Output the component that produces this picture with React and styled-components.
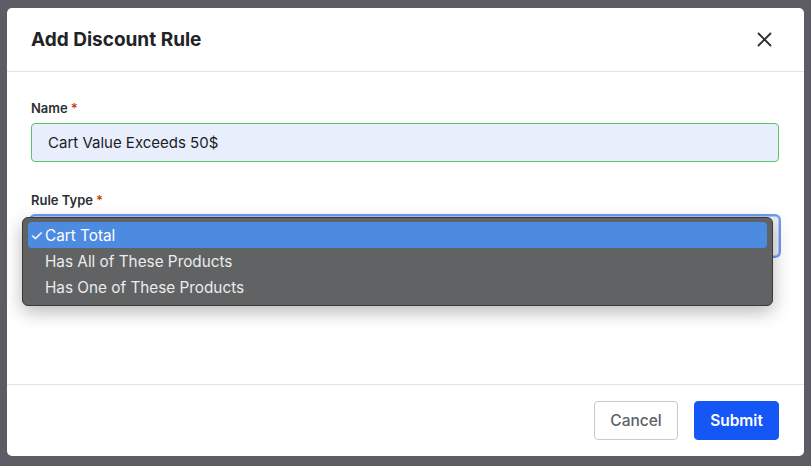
import React from "react";
import styled, { createGlobalStyle } from "styled-components";

const GlobalStyle = createGlobalStyle`
  html, body {
    margin: 0;
    padding: 0;
    background: #5b5c64;
    font-family: Inter, "Noto Sans", sans-serif;
  }
`;

const Page = styled.div`
  padding: 8px 7px;
  height: 466px;
  box-sizing: border-box;
`;

const Modal = styled.div`
  width: 797px;
  height: 448px;
  background: #fff;
  border-radius: 5px;
  display: flex;
  flex-direction: column;
`;

const Header = styled.header`
  height: 63px;
  padding: 0 31px 0 24px;
  display: flex;
  align-items: center;
  justify-content: space-between;
  border-bottom: 1px solid #e3e3e8;
`;

const Title = styled.h2`
  margin: 0;
  font-size: 19px;
  font-weight: 700;
  color: #222326;
`;

const CloseButton = styled.button`
  border: none;
  background: none;
  padding: 0;
  width: 18px;
  height: 18px;
  display: flex;
  align-items: center;
  justify-content: center;
  cursor: pointer;
`;

const Body = styled.div`
  flex: 1;
  padding: 28px 25px 0 24px;
  display: flex;
  flex-direction: column;
`;

const Field = styled.div`
  display: flex;
  flex-direction: column;
  gap: 7px;
  margin-bottom: ${(p) => p.$gap || 0}px;
  position: relative;
`;

const Label = styled.label`
  font-size: 13px;
  line-height: 16px;
  font-weight: 600;
  color: #2e2f33;
  span {
    color: #c2410c;
    margin-left: 3px;
  }
`;

const Input = styled.input`
  height: 39px;
  box-sizing: border-box;
  border: 1px solid #5cc46c;
  border-radius: 4px;
  background: #e8eefc;
  padding: 0 16px;
  font-family: inherit;
  font-size: 15px;
  color: #1b1c1f;
  outline: none;
`;

const SelectBox = styled.div`
  height: 40px;
  margin-top: 1px;
  box-sizing: border-box;
  border: 1px solid #b8c8ee;
  border-radius: 4px;
  background: #eef0f7;
  box-shadow: 0 0 0 2px #6f9cf3;
`;

const Menu = styled.ul`
  position: absolute;
  left: -9px;
  top: 25px;
  width: 751px;
  margin: 0;
  padding: 4px 5px 5px;
  box-sizing: border-box;
  list-style: none;
  background: #616264;
  border: 1px solid #38393b;
  border-radius: 6px;
  box-shadow: 0 6px 18px rgba(0, 0, 0, 0.28);
  z-index: 10;
`;

const Option = styled.li`
  height: 26px;
  display: flex;
  align-items: center;
  padding-left: 17px;
  position: relative;
  border-radius: 4px;
  font-size: 15.3px;
  color: ${(p) => (p.$active ? "#ffffff" : "#ececec")};
  background: ${(p) => (p.$active ? "#4d8be0" : "transparent")};
`;

const Check = styled.span`
  position: absolute;
  left: 2px;
  font-size: 15px;
  color: #fff;
`;

const Footer = styled.footer`
  height: 71px;
  border-top: 1px solid #e3e3e8;
  display: flex;
  align-items: center;
  justify-content: flex-end;
  gap: 16px;
  padding: 0 25px 0 0;
`;

const Button = styled.button`
  height: 39px;
  width: ${(p) => (p.$primary ? 85 : 84)}px;
  padding: 0;
  border-radius: 4px;
  font-family: inherit;
  font-size: 15.5px;
  font-weight: ${(p) => (p.$primary ? 600 : 500)};
  border: 1px solid ${(p) => (p.$primary ? "#1556f6" : "#c9c9d1")};
  background: ${(p) => (p.$primary ? "#1556f6" : "#fff")};
  color: ${(p) => (p.$primary ? "#fff" : "#5d5f6b")};
  cursor: pointer;
`;

const options = ["Cart Total", "Has All of These Products", "Has One of These Products"];

export default function App() {
  return (
    <>
      <GlobalStyle />
      <Page>
        <Modal>
          <Header>
            <Title>Add Discount Rule</Title>
            <CloseButton aria-label="Close">
              <svg width="15" height="15" viewBox="0 0 15 15">
                <path d="M1.5 1.5 L13.5 13.5 M13.5 1.5 L1.5 13.5" stroke="#2b2c30" strokeWidth="1.8" strokeLinecap="round" />
              </svg>
            </CloseButton>
          </Header>
          <Body>
            <Field $gap={30}>
              <Label>
                Name<span>*</span>
              </Label>
              <Input defaultValue="Cart Value Exceeds 50$" />
            </Field>
            <Field>
              <Label>
                Rule Type<span>*</span>
              </Label>
              <SelectBox />
              <Menu>
                {options.map((o, i) => (
                  <Option key={o} $active={i === 0}>
                    {i === 0 && <Check>✓</Check>}
                    {o}
                  </Option>
                ))}
              </Menu>
            </Field>
          </Body>
          <Footer>
            <Button>Cancel</Button>
            <Button $primary>Submit</Button>
          </Footer>
        </Modal>
      </Page>
    </>
  );
}
